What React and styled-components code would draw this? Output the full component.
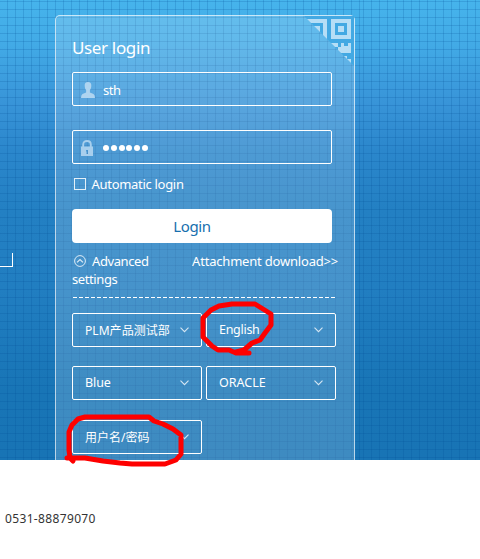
import React from 'react';
import styled, { createGlobalStyle } from 'styled-components';

const GlobalStyle = createGlobalStyle`
  *, *::before, *::after { box-sizing: border-box; }
  body { margin: 0; background: #fff; overflow: hidden; font-family: "Noto Sans", "Noto Sans CJK SC", sans-serif; }
`;

const Page = styled.main`
  position: relative;
  width: 480px;
  height: 559px;
  overflow: hidden;
`;

const line = 'rgba(0, 74, 146, 0.19)';

const Hero = styled.section`
  position: relative;
  display: flex;
  height: 460px;
  padding: 15px 0 0 55px;
  overflow: hidden;
  background: linear-gradient(#46b4ec 0, #42aae6 45px, #3894d8 103px, #2b87cc 150px, #2380c3 210px, #217ec1 290px, #1875b6 390px, #1874b5 460px);
  &::before {
    content: '';
    position: absolute;
    inset: 0 120px 0 0;
    background:
      linear-gradient(to right, transparent 7px, ${line} 7px) 0 0 / 8px 8px,
      linear-gradient(to bottom, ${line} 1px, transparent 1px) 0 1px / 8px 8px;
  }
  &::after {
    content: '';
    position: absolute;
    inset: 0 0 0 360px;
    background:
      linear-gradient(to right, transparent 7px, ${line} 7px) -4px 0 / 8px 8px,
      linear-gradient(to bottom, ${line} 1px, transparent 1px) 0 1px / 8px 8px;
  }
`;

const Panel = styled.form`
  position: relative;
  z-index: 1;
  width: 300px;
  height: 460px;
  padding: 21px 16px 0;
  border: 1px solid rgba(255, 255, 255, 0.66);
  border-radius: 5px;
  background: rgba(255, 255, 255, 0.17);
  color: #fff;
  font-size: 13px;
`;

const Title = styled.h1`
  margin: 0 0 13px;
  height: 22px;
  font-size: 17px;
  line-height: 22px;
  font-weight: 400;
  letter-spacing: -0.35px;
`;

const Text = styled.span`
  font-size: ${p => p.$size || 13}px;
  letter-spacing: ${p => p.$tracking || 0}px;
  white-space: nowrap;
`;

const Field = styled.div`
  display: flex;
  align-items: center;
  width: 260px;
  height: 34px;
  margin-bottom: 24px;
  padding: 2px 0 0 8px;
  gap: 8px;
  border: 1px solid #fff;
  border-radius: 2px;
`;

const PasswordDots = styled.span`
  display: flex;
  gap: 1.8px;
  margin-left: 2px;
`;

const Dot = styled.i`
  width: 6px;
  height: 6px;
  border-radius: 50%;
  background: #fff;
`;

const Remember = styled.label`
  display: flex;
  align-items: center;
  gap: 5.5px;
  height: 18px;
  margin: -13px 0 0 2px;
`;

const Box = styled.i`
  width: 12px;
  height: 12px;
  border: 1px solid rgba(255, 255, 255, 0.85);
`;

const LoginButton = styled.button`
  display: flex;
  align-items: center;
  justify-content: center;
  width: 260px;
  height: 34px;
  margin: 16px 0 9px;
  padding: 0 20px 0 0;
  border: 0;
  border-radius: 4px;
  background: #fff;
  color: #176fae;
  font: 15px "Noto Sans", sans-serif;
  letter-spacing: -0.35px;
`;

const Links = styled.div`
  display: flex;
  justify-content: space-between;
  width: 266px;
  height: 46px;
  line-height: 18px;
  background: repeating-linear-gradient(to right, #fff 0 4px, transparent 4px 6px) 1px 100% / 264px 1px no-repeat;
`;

const Advanced = styled.div`
  display: flex;
  flex-direction: column;
`;

const AdvancedTop = styled.span`
  display: flex;
  align-items: center;
  gap: 6px;
  height: 18px;
  padding-left: 2px;
`;

const Options = styled.div`
  display: grid;
  grid-template: 53px 54px 34px / 130px 130px;
  column-gap: 4px;
  margin-top: 15px;
`;

const Select = styled.div`
  display: flex;
  justify-content: space-between;
  align-items: center;
  height: 34px;
  padding: 0 12px 1px;
  border: 1px solid #fff;
  border-radius: 2px;
`;

const QrCorner = styled.svg`
  position: absolute;
  top: 0;
  right: 0;
  width: 53px;
  height: 53px;
`;

const CornerMark = styled.i`
  position: absolute;
  z-index: 1;
  left: 0;
  top: 253px;
  width: 13px;
  height: 14px;
  border: solid #fff;
  border-width: 0 1px 1px 0;
`;

const Footer = styled.footer`
  padding: 51px 5px 0;
  color: #333;
  font-size: 12px;
  line-height: 16px;
  letter-spacing: 0.35px;
`;

const Ink = styled.svg`
  position: absolute;
  z-index: 2;
  inset: 0;
  pointer-events: none;
`;

const Chevron = () => (
  <svg width="9" height="6" viewBox="0 0 9 6" fill="none" stroke="#d5e6f3" strokeWidth="1.1">
    <path d="M.5.7 4.5 4.7 8.5.7" />
  </svg>
);

const UserIcon = () => (
  <svg width="14" height="16" viewBox="0 0 14 16" fill="#aed4f0">
    <path d="M7 0C4.6 0 3.5 1.5 3.7 4c.1 2 .6 3.1 1.4 4v2.4L1.5 12Q0 12.8 0 16h14q0-3.2-1.5-4L8.9 10.4V8c.8-.9 1.3-2 1.4-4C10.5 1.5 9.4 0 7 0Z" />
  </svg>
);

const LockIcon = () => (
  <svg width="12" height="16" viewBox="0 0 12 16">
    <path d="M2.2 7V4.5C2.2 2.2 3.6 1 6 1s3.8 1.2 3.8 3.5V7" fill="none" stroke="#a8cfed" strokeWidth="1.9" />
    <path fill="#a8cfed" fillRule="evenodd" d="M0 6.5h12V16H0ZM5 10v1.5h.5V14H7v-4Z" />
  </svg>
);

const CircleUp = () => (
  <svg width="12" height="12" viewBox="0 0 12 12" fill="none" stroke="#dcebf6">
    <circle cx="6" cy="6" r="5.4" />
    <path d="m3 7.4 3-2.8 3 2.8" strokeWidth="1.2" />
  </svg>
);

const QrCode = () => (
  <QrCorner viewBox="0 0 53 53">
    <defs><clipPath id="fold"><path d="M3 0h50v50Z" /></clipPath></defs>
    <g clipPath="url(#fold)">
      <path d="M0 0h53v53H0Z" fill="#43a9e3" />
      <path fill="#b6def6" fillRule="evenodd" d="M6 3h20v20H6Zm0 4v12h16V7Zm2 3h11v6H8ZM30 3h20v20H30Zm4 4v12h12V7Zm3 3h6v6h-6ZM30 27h7v4h-7Zm10 0h3v3h-3Zm7 0h3v10h-3v-3h-3v-4h3Zm-7 3h4v4h3v3h-5v-3h-5v-3h3ZM37 34h5v3h-5Zm6 6h3v3h-3Zm3 3h4v4h-4Z" />
    </g>
  </QrCorner>
);

const options = [
  { label: 'PLM产品测试部', size: 12, tracking: 0.05 },
  { label: 'English', size: 12.5, tracking: -0.28 },
  { label: 'Blue', size: 12.5, tracking: -0.1 },
  { label: 'ORACLE', size: 12.5, tracking: 0 },
  { label: '用户名/密码', size: 12, tracking: 0 },
];

export default function App() {
  return (
    <Page>
      <GlobalStyle />
      <Hero>
        <CornerMark />
        <Panel>
          <QrCode />
          <Title>User login</Title>
          <Field><UserIcon /><Text $tracking={-0.4}>sth</Text></Field>
          <Field>
            <LockIcon />
            <PasswordDots>{Array.from({ length: 6 }, (_, i) => <Dot key={i} />)}</PasswordDots>
          </Field>
          <Remember><Box /><Text $tracking={-0.3}>Automatic login</Text></Remember>
          <LoginButton type="button">Login</LoginButton>
          <Links>
            <Advanced>
              <AdvancedTop><CircleUp /><Text $tracking={-0.4}>Advanced</Text></AdvancedTop>
              <Text $tracking={-0.4}>settings</Text>
            </Advanced>
            <Text $tracking={-0.2}>Attachment download&gt;&gt;</Text>
          </Links>
          <Options>
            {options.map(({ label, size, tracking }) => (
              <Select key={label}><Text $size={size} $tracking={tracking}>{label}</Text><Chevron /></Select>
            ))}
          </Options>
        </Panel>
      </Hero>
      <Footer>0531-88879070</Footer>
      <Ink width="480" height="559" fill="none" stroke="#fe0000" strokeLinejoin="round" strokeLinecap="round">
        <path strokeWidth="5" d="M249 353H236L229 350H218L212 346L203 337V318L211 310L219 306L232 304H255L271 314V325L265 333L260 340L252 343L244 350L236 352" />
        <path strokeWidth="5" d="M67 458H85L103 461L120 463L132 464H165L176 460L181 454V435L173 429L163 424L154 421L149 417H85L78 419L72 425L69 432V450L70 458L73 461" />
      </Ink>
    </Page>
  );
}
